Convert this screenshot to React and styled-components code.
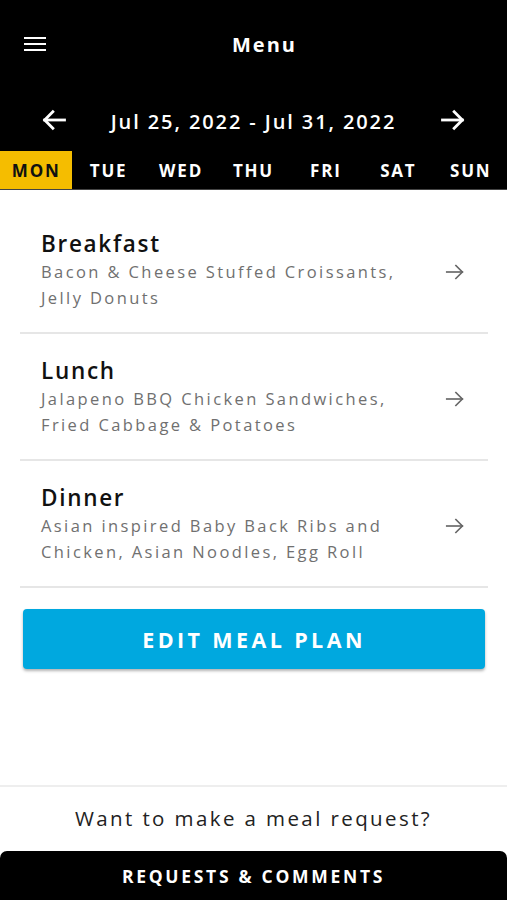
import React from "react";
import styled, { createGlobalStyle } from "styled-components";

const Global = createGlobalStyle`
  * { box-sizing: border-box; }
  html, body { margin: 0; padding: 0; background: #fff; }
  body { font-family: "Open Sans", "Noto Sans", sans-serif; }
`;

const Page = styled.div`
  width: 507px;
  height: 900px;
  display: flex;
  flex-direction: column;
  background: #fff;
  overflow: hidden;
`;

const Header = styled.header`
  background: #000;
  color: #fff;
  display: flex;
  flex-direction: column;
`;

const TopBar = styled.div`
  height: 88px;
  display: grid;
  grid-template-columns: 1fr auto 1fr;
  align-items: center;
  padding: 0 20px;
`;

const IconButton = styled.button`
  background: none;
  border: 0;
  padding: 0;
  color: inherit;
  display: flex;
  align-items: center;
  justify-content: flex-start;
  cursor: pointer;
`;

const Title = styled.h1`
  margin: 0;
  text-align: center;
  font-size: 20px;
  font-weight: 700;
  letter-spacing: 2px;
  padding-left: 22px;
`;

const DateRow = styled.div`
  height: 63px;
  display: flex;
  align-items: center;
  justify-content: space-between;
  padding: 0 40px 0 40px;
`;

const DateText = styled.div`
  font-size: 20px;
  font-weight: 600;
  letter-spacing: 1.9px;
  margin-top: 4px;
`;

const Tabs = styled.nav`
  display: flex;
  height: 39px;
  border-bottom: 1px solid #444;
`;

const Tab = styled.div`
  flex: 1;
  display: flex;
  align-items: center;
  justify-content: center;
  font-size: 17px;
  font-weight: 700;
  letter-spacing: 1.8px;
  background: ${(p) => (p.$active ? "#f5bd00" : "#000")};
  color: ${(p) => (p.$active ? "#111" : "#fff")};
`;

const Meals = styled.main`
  padding: 17px 19px 0 20px;
  display: flex;
  flex-direction: column;
`;

const MealRow = styled.div`
  display: flex;
  align-items: center;
  min-height: 127px;
  padding: 20px 22px 20px 21px;
  border-bottom: 2px solid #e6e6e6;
`;

const MealText = styled.div`
  flex: 1;
`;

const MealTitle = styled.div`
  font-size: 22.5px;
  font-weight: 600;
  color: #111;
  letter-spacing: 1.7px;
  line-height: 30px;
`;

const MealDesc = styled.div`
  font-size: 16.5px;
  color: #707070;
  letter-spacing: 2.4px;
  line-height: 26px;
  max-width: 372px;
`;

const Arrow = styled.div`
  color: #666;
  display: flex;
  margin-top: 4px;
`;

const EditButton = styled.button`
  margin: 21px 22px 0 23px;
  height: 60px;
  border: 0;
  border-radius: 4px;
  background: #00a8df;
  color: #fff;
  font-family: inherit;
  font-size: 21.5px;
  font-weight: 700;
  letter-spacing: 3.4px;
  box-shadow: 0 2px 3px rgba(0, 0, 0, 0.3);
`;

const Spacer = styled.div`
  flex: 1;
`;

const Footer = styled.footer`
  border-top: 2px solid #eeeeee;
  display: flex;
  flex-direction: column;
`;

const Prompt = styled.div`
  height: 64px;
  padding-bottom: 3px;
  display: flex;
  align-items: center;
  justify-content: center;
  font-size: 20.5px;
  color: #222;
  letter-spacing: 2.4px;
`;

const RequestBar = styled.button`
  height: 49px;
  border: 0;
  border-radius: 7px 7px 0 0;
  background: #000;
  color: #fff;
  font-family: inherit;
  font-size: 17.5px;
  font-weight: 700;
  letter-spacing: 2.7px;
`;

const ArrowIcon = ({ dir = "right", size = 24, stroke = 2 }) => (
  <svg width={size} height={size} viewBox="0 0 24 24" fill="none" stroke="currentColor" strokeWidth={stroke} strokeLinecap="square">
    {dir === "right" ? (
      <>
        <path d="M3 12h17" />
        <path d="M13 5l7 7-7 7" />
      </>
    ) : (
      <>
        <path d="M21 12H4" />
        <path d="M11 5l-7 7 7 7" />
      </>
    )}
  </svg>
);

const meals = [
  { title: "Breakfast", desc: "Bacon & Cheese Stuffed Croissants, Jelly Donuts" },
  { title: "Lunch", desc: "Jalapeno BBQ Chicken Sandwiches, Fried Cabbage & Potatoes" },
  { title: "Dinner", desc: "Asian inspired Baby Back Ribs and Chicken, Asian Noodles, Egg Roll" },
];

const days = ["MON", "TUE", "WED", "THU", "FRI", "SAT", "SUN"];

export default function App() {
  return (
    <Page>
      <Global />
      <Header>
        <TopBar>
          <IconButton aria-label="menu">
            <svg width="30" height="30" viewBox="0 0 30 30" fill="none" stroke="#fff" strokeWidth="2">
              <path d="M4 9h22M4 15h22M4 21h22" />
            </svg>
          </IconButton>
          <Title>Menu</Title>
          <span />
        </TopBar>
        <DateRow>
          <ArrowIcon dir="left" size={28} stroke={2.4} />
          <DateText>Jul 25, 2022 - Jul 31, 2022</DateText>
          <ArrowIcon dir="right" size={28} stroke={2.4} />
        </DateRow>
        <Tabs>
          {days.map((d, i) => (
            <Tab key={d} $active={i === 0}>{d}</Tab>
          ))}
        </Tabs>
      </Header>
      <Meals>
        {meals.map((m) => (
          <MealRow key={m.title}>
            <MealText>
              <MealTitle>{m.title}</MealTitle>
              <MealDesc>{m.desc}</MealDesc>
            </MealText>
            <Arrow>
              <ArrowIcon dir="right" size={22} stroke={1.8} />
            </Arrow>
          </MealRow>
        ))}
      </Meals>
      <EditButton>EDIT MEAL PLAN</EditButton>
      <Spacer />
      <Footer>
        <Prompt>Want to make a meal request?</Prompt>
        <RequestBar>REQUESTS &amp; COMMENTS</RequestBar>
      </Footer>
    </Page>
  );
}
